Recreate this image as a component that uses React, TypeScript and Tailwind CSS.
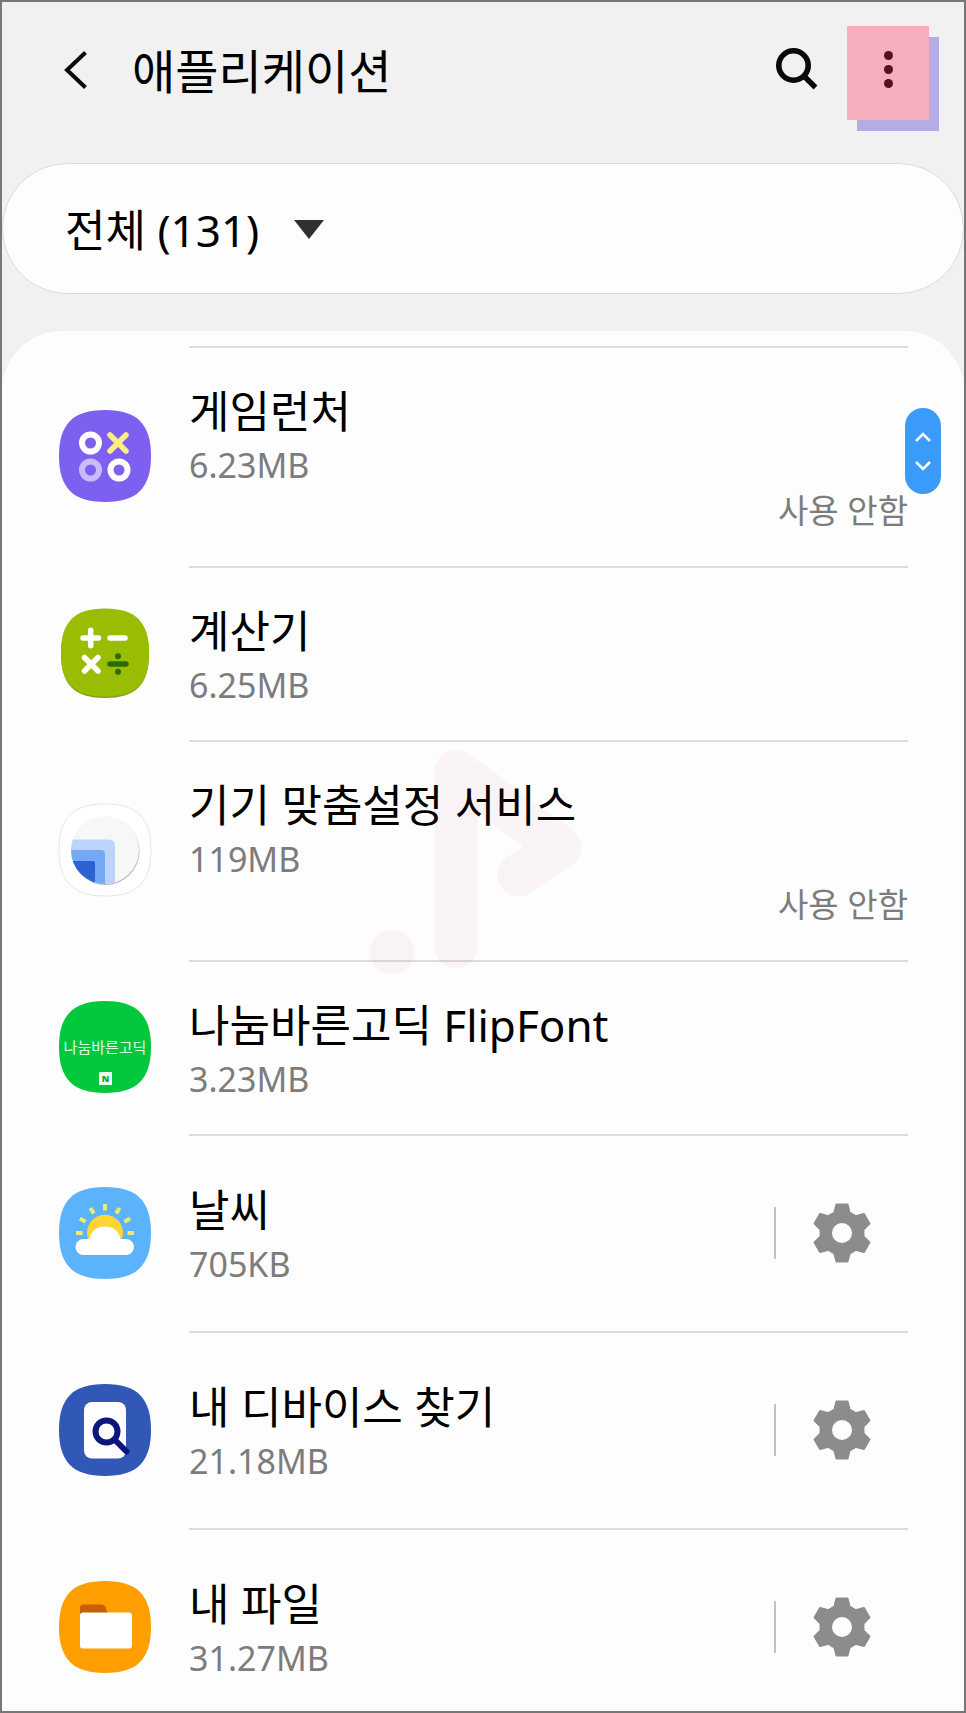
import {ReactNode} from "react";

interface AppInfo {
    name: string;
    size: string;
    icon: ReactNode;
    disabled?: boolean; // shows the "not in use" line
    hasSettings?: boolean;
}

const SQUIRCLE = "M46 0C78 0 92 14 92 46C92 78 78 92 46 92C14 92 0 78 0 46C0 14 14 0 46 0Z";

function IconBase({color, children}: Readonly<{ color: string; children: ReactNode }>) {
    return (
        <svg viewBox="0 0 92 92" className="size-[92px] shrink-0 overflow-visible" aria-hidden="true">
            <path d={SQUIRCLE} fill={color}/>
            {children}
        </svg>
    );
}

function GameIcon() {
    return (
        <IconBase color="#7d60f0">
            <g fill="none" stroke="#fff" strokeWidth="6" strokeLinecap="round">
                <circle cx="31.5" cy="33" r="8.5"/>
                <circle cx="60" cy="60" r="8.5"/>
                <circle cx="31.5" cy="60" r="8.5" stroke="#c9bcfb"/>
                <path d="M51 25L67 41M67 25L51 41" stroke="#fbee84" strokeWidth="5.5"/>
            </g>
        </IconBase>
    );
}

function CalculatorIcon() {
    return (
        <svg viewBox="0 0 92 92" className="size-[92px] shrink-0" aria-hidden="true">
            <path d={SQUIRCLE} fill="#84a30f" transform="translate(2 3) scale(.957)"/>
            <path d={SQUIRCLE} fill="#98bd02" transform="translate(2 1.5) scale(.957)"/>
            <g stroke="#fff" strokeWidth="5.5" strokeLinecap="round">
                <path d="M24 31H39.5M31.7 23.2V38.8M51 31H66M25.5 50.5L39 64M39 50.5L25.5 64"/>
                <path d="M51 57H67" stroke="#2a6b05"/>
            </g>
            <circle cx="59" cy="49.3" r="3" fill="#2a6b05"/>
            <circle cx="59" cy="64.8" r="3" fill="#2a6b05"/>
        </svg>
    );
}

function CustomizationIcon() {
    return (
        <svg viewBox="0 0 92 92" className="size-[92px] shrink-0 overflow-visible" aria-hidden="true">
            <defs>
                <clipPath id="lens">
                    <circle cx="46" cy="46" r="34"/>
                </clipPath>
            </defs>
            <path d={SQUIRCLE} fill="#fff" stroke="#e6e6e6"/>
            <circle cx="46.5" cy="47" r="34" fill="#b5b5b5"/>
            <circle cx="46" cy="46" r="34" fill="#f7f7f7"/>
            <g clipPath="url(#lens)">
                <rect x="-10" y="35.5" width="66" height="80" rx="6" fill="#bcd4fa"/>
                <rect x="-10" y="46" width="56" height="80" rx="4" fill="#74a8f5"/>
                <rect x="-10" y="57" width="46" height="80" rx="2" fill="#2c62d2"/>
            </g>
        </svg>
    );
}

function NanumIcon() {
    return (
        <IconBase color="#04c83c">
            <text x="46" y="52" textAnchor="middle" fill="#dcffe4" className="text-[15px]">나눔바른고딕</text>
            <rect x="40" y="71" width="13" height="13" fill="#e9fff0"/>
            <text x="46.5" y="81" textAnchor="middle" fill="#04a634" className="text-[9px] font-black">N</text>
        </IconBase>
    );
}

function WeatherIcon() {
    return (
        <IconBase color="#5bb3fb">
            <g stroke="#eeea72" strokeWidth="4">
                {[-90, -60, -30, 0, 30, 60, 90].map((angle) => (
                    <path key={angle} d="M46 17V23.5" transform={`rotate(${angle} 46 46)`}/>
                ))}
            </g>
            <circle cx="46" cy="45.8" r="18" fill="#fdd535"/>
            <path
                d="M24.5 52H30.5C32 44 38 39.5 46 39.5S60 44 61.5 52H67A8 8 0 0 1 67 68H24.5A8 8 0 0 1 24.5 52Z"
                fill="#fff"
            />
        </IconBase>
    );
}

function FindDeviceIcon() {
    return (
        <IconBase color="#3158b6">
            <rect x="25" y="18" width="42" height="56.5" rx="8" fill="#fff"/>
            <g fill="none" stroke="#0b167e" strokeWidth="6">
                <circle cx="47.5" cy="47.5" r="11"/>
                <path d="M56 56L67.5 67.5" strokeLinecap="round"/>
            </g>
        </IconBase>
    );
}

function FilesIcon() {
    return (
        <IconBase color="#ff9e00">
            <path d="M21 36V27Q21 23.5 24.5 23.5H43Q45.5 23.5 46.5 26L49 33V36Z" fill="#c75f03"/>
            <rect x="21" y="31.5" width="52" height="36" rx="3" fill="#fff"/>
        </IconBase>
    );
}

function GearIcon() {
    return (
        <svg viewBox="-30 -30 60 60" className="size-[60px]" aria-hidden="true">
            <circle r="15.5" fill="none" stroke="#8c8c8c" strokeWidth="11"/>
            {[0, 60, 120, 180, 240, 300].map((angle) => (
                <path
                    key={angle}
                    d="M-5.5 -28.5H5.5L7.5 -21Q8.5 -18 12 -18L0 -13L-12 -18Q-8.5 -18 -7.5 -21Z"
                    fill="#8c8c8c"
                    stroke="#8c8c8c"
                    strokeWidth="2"
                    strokeLinejoin="round"
                    transform={`rotate(${angle})`}
                />
            ))}
        </svg>
    );
}

const apps: AppInfo[] = [
    {name: "게임런처", size: "6.23MB", icon: <GameIcon/>, disabled: true},
    {name: "계산기", size: "6.25MB", icon: <CalculatorIcon/>},
    {name: "기기 맞춤설정 서비스", size: "119MB", icon: <CustomizationIcon/>, disabled: true},
    {name: "나눔바른고딕 FlipFont", size: "3.23MB", icon: <NanumIcon/>},
    {name: "날씨", size: "705KB", icon: <WeatherIcon/>, hasSettings: true},
    {name: "내 디바이스 찾기", size: "21.18MB", icon: <FindDeviceIcon/>, hasSettings: true},
    {name: "내 파일", size: "31.27MB", icon: <FilesIcon/>, hasSettings: true},
];

function AppRow({app}: Readonly<{ app: AppInfo }>) {
    return (
        <li className="flex items-center gap-[38px] pl-[57px] pr-[56px]">
            {app.icon}
            <div
                className={`flex min-w-0 flex-1 items-center border-t-2 border-[#dcdcdc] ${app.hasSettings ? "pb-[44px] pt-[43px]" : "py-8"}`}
            >
                <div className="flex-1">
                    <h2 className="text-[44px] leading-[62px] text-black">{app.name}</h2>
                    <p className="text-[34px] leading-[46px] text-[#7c7c7c]">{app.size}</p>
                    {app.disabled && (
                        <p className="text-right text-[33px] leading-[46px] text-[#7c7c7c]">사용 안함</p>
                    )}
                </div>
                {app.hasSettings && (
                    <div className="flex items-center gap-9 pr-9">
                        <span className="h-[52px] w-0.5 bg-[#c2c2c2]"/>
                        <button type="button" aria-label={`${app.name} 설정`} className="cursor-pointer">
                            <GearIcon/>
                        </button>
                    </div>
                )}
            </div>
        </li>
    );
}

export default function App() {
    return (
        <div
            className="flex h-screen flex-col overflow-hidden border-2 border-[#777] bg-[#f1f1f1] font-['Noto_Sans','Noto_Sans_CJK_KR',sans-serif]">
            <header className="flex h-[161px] shrink-0 items-start pl-[60px] pr-[35px] pt-6">
                <button type="button" aria-label="뒤로" className="mt-[22px] cursor-pointer">
                    <svg viewBox="0 0 30 44" className="h-11 w-[30px]" fill="none" stroke="#0a0a0a" strokeWidth="4">
                        <path d="M23.5 4.5L5 22L23.5 39.5"/>
                    </svg>
                </button>
                <h1 className="ml-10 mt-[13px] flex-1 text-[47px] leading-[64px] text-black">애플리케이션</h1>
                <button type="button" aria-label="검색" className="mr-7 mt-[19px] cursor-pointer">
                    <svg viewBox="0 0 48 48" className="size-12" fill="none" stroke="#0a0a0a">
                        <circle cx="22.5" cy="20.5" r="14.7" strokeWidth="5.6"/>
                        <path d="M33 31L44.5 42.5" strokeWidth="5.4"/>
                    </svg>
                </button>
                <button
                    type="button"
                    aria-label="더보기"
                    className="flex h-[94px] w-[82px] cursor-pointer flex-col items-center gap-[5px] bg-[#f6adbc] pt-[25px] shadow-[10px_11px_0_#b3ade3]"
                >
                    <span className="size-[9px] rounded-full bg-[#570f1e]"/>
                    <span className="size-[9px] rounded-full bg-[#570f1e]"/>
                    <span className="size-[9px] rounded-full bg-[#570f1e]"/>
                </button>
            </header>

            <label
                className="flex h-[131px] shrink-0 items-center gap-[35px] rounded-full border border-[#dadada] bg-[#fdfdfd] pl-[62px] pt-0.5">
                <select
                    aria-label="앱 필터"
                    className="field-sizing-content cursor-pointer appearance-none bg-transparent text-[44px] leading-[64px] text-black outline-none"
                >
                    <option>전체 (131)</option>
                </select>
                <svg viewBox="0 0 30 19" className="h-[19px] w-[30px]" aria-hidden="true">
                    <path d="M0 0H30L15 19Z" fill="#303030"/>
                </svg>
            </label>

            <main className="relative mt-[37px] min-h-0 flex-1 overflow-hidden rounded-t-[60px] bg-[#fdfdfd] pt-[15px]">
                <ul className="h-full overflow-y-auto [scrollbar-width:none]">
                    {apps.map((app) => <AppRow key={app.name} app={app}/>)}
                </ul>

                {/* Faint music note over the list */}
                <svg
                    viewBox="0 0 220 230"
                    className="pointer-events-none absolute left-[366px] top-[416px] h-[230px] w-[220px]"
                    fill="none"
                    aria-hidden="true"
                >
                    <g opacity=".035">
                        <path
                            d="M88 200V24L192 100L151 128"
                            stroke="#c8003c"
                            strokeWidth="43"
                            strokeLinecap="round"
                            strokeLinejoin="round"
                        />
                        <circle cx="24" cy="205" r="22.5" fill="#c8003c"/>
                    </g>
                </svg>

                {/* Fast scroll handle */}
                <div
                    className="absolute right-[23px] top-[77px] flex h-[86px] w-9 flex-col items-center justify-center gap-[19px] rounded-full bg-[#3b9bfb]">
                    <svg viewBox="0 0 16 10" className="h-2.5 w-4" fill="none" stroke="#fff" strokeWidth="2.5">
                        <path d="M1 9L8 2L15 9"/>
                    </svg>
                    <svg viewBox="0 0 16 10" className="h-2.5 w-4" fill="none" stroke="#fff" strokeWidth="2.5">
                        <path d="M1 1L8 8L15 1"/>
                    </svg>
                </div>
            </main>
        </div>
    );
}
